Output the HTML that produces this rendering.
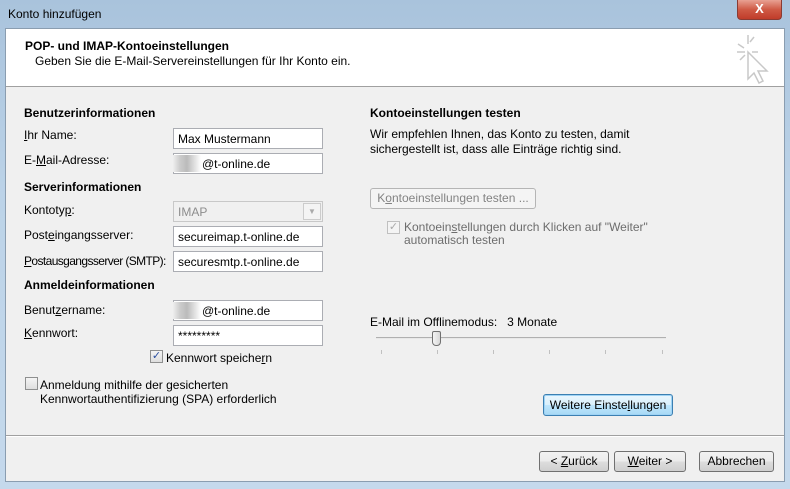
<!DOCTYPE html>
<html><head><meta charset="utf-8"><style>
*{margin:0;padding:0;box-sizing:border-box}
body{width:790px;height:489px;overflow:hidden;font-family:"Liberation Sans",sans-serif;font-size:12px;color:#000;background:linear-gradient(#a9c3dc,#bcd3e8 40%,#c5d9ec);position:relative}
.a{position:absolute;white-space:nowrap}
.in{position:absolute;background:#fff;border:1px solid #abadb3;height:21px;padding:3px 0 0 4px}
.b{font-weight:bold}
.btn{position:absolute;height:21px;border:1px solid #707070;border-radius:3px;background:linear-gradient(#f2f2f2,#ebebeb 50%,#dddddd 51%,#cfcfcf);text-align:center;line-height:19px}
.cb{position:absolute;width:13px;height:13px;border:1px solid #8e8f8f;background:linear-gradient(#f4f4f4,#dedede)}
u{text-decoration:underline}
</style></head><body>
<div class="a" style="left:8px;top:7px">Konto hinzufügen</div>
<div class="a" style="left:737px;top:0;width:45px;height:20px;border:1px solid #8a3b33;border-top:none;border-radius:0 0 4px 4px;background:linear-gradient(#e8a193,#cf5a45 50%,#c03c2a);color:#fff;font-weight:bold;text-align:center;line-height:18px;font-size:13px">X</div>
<div class="a" style="left:5px;top:28px;width:780px;height:454px;background:#f0f0f0;border:1px solid #8a9db0"></div>
<div class="a" style="left:6px;top:29px;width:778px;height:58px;background:#fff;border-bottom:1px solid #a0a0a0"></div>
<div class="a b" style="left:25px;top:39px">POP- und IMAP-Kontoeinstellungen</div>
<div class="a" style="left:35px;top:54px">Geben Sie die E-Mail-Servereinstellungen für Ihr Konto ein.</div>
<svg class="a" style="left:734px;top:32px" width="40" height="52" viewBox="0 0 40 52" fill="none" stroke="#c8c8c8" stroke-width="1.5"><path d="M14 3v9M4 12l6 4M20 5l-4 5M3 20h8M18 20h6M6 28l5-5"/><path d="M14 20l0 27 6-6 5 10 4-2-5-10 9 0z" fill="#fff"/></svg>
<div class="a b" style="left:24px;top:106px">Benutzerinformationen</div>
<div class="a" style="left:24px;top:128px"><u>I</u>hr Name:</div>
<div class="in" style="left:173px;top:128px;width:150px">Max Mustermann</div>
<div class="a" style="left:24px;top:153px">E-<u>M</u>ail-Adresse:</div>
<div class="in" style="left:173px;top:153px;width:150px;padding-left:28px">@t-online.de</div>
<div class="a" style="left:173px;top:155px;width:28px;height:17px;background:linear-gradient(90deg,#eee,#ccc,#bbb,#ddd,#fff)"></div>
<div class="a b" style="left:24px;top:180px">Serverinformationen</div>
<div class="a" style="left:24px;top:203px">Kontoty<u>p</u>:</div>
<div class="in" style="left:173px;top:201px;width:150px;background:#f0f0f0;border-color:#c8c8c8;color:#8d8d8d">IMAP</div>
<div class="a" style="left:303px;top:203px;width:18px;height:17px;border:1px solid #ccc;background:#f4f4f4;color:#aaa;font-size:8px;text-align:center;line-height:16px">▼</div>
<div class="a" style="left:24px;top:228px">Post<u>e</u>ingangsserver:</div>
<div class="in" style="left:173px;top:226px;width:150px">secureimap.t-online.de</div>
<div class="a" style="left:24px;top:254px;letter-spacing:-0.6px"><u>P</u>ostausgangsserver (SMTP):</div>
<div class="in" style="left:173px;top:251px;width:150px">securesmtp.t-online.de</div>
<div class="a b" style="left:24px;top:278px">Anmeldeinformationen</div>
<div class="a" style="left:24px;top:303px">Benut<u>z</u>ername:</div>
<div class="in" style="left:173px;top:300px;width:150px;padding-left:28px">@t-online.de</div>
<div class="a" style="left:173px;top:302px;width:28px;height:17px;background:linear-gradient(90deg,#eee,#ccc,#bbb,#ddd,#fff)"></div>
<div class="a" style="left:24px;top:326px"><u>K</u>ennwort:</div>
<div class="in" style="left:173px;top:325px;width:150px">*********</div>
<div class="cb" style="left:150px;top:350px;color:#2a4fa0;font-size:11px;line-height:11px;text-align:center">✓</div>
<div class="a" style="left:166px;top:351px">Kennwort speiche<u>r</u>n</div>
<div class="cb" style="left:25px;top:377px"></div>
<div class="a" style="left:40px;top:378px;line-height:14px">Anmeldun<u>g</u> mithilfe der gesicherten<br>Kennwortauthentifizierung (SPA) erforderlich</div>
<div class="a b" style="left:370px;top:106px">Kontoeinstellungen testen</div>
<div class="a" style="left:370px;top:127px;line-height:15px">Wir empfehlen Ihnen, das Konto zu testen, damit<br>sichergestellt ist, dass alle Einträge richtig sind.</div>
<div class="btn" style="left:370px;top:188px;width:166px;border-color:#b5b5b5;background:#f4f4f4;color:#838383">K<u>o</u>ntoeinstellungen testen ...</div>
<div class="cb" style="left:387px;top:221px;border-color:#c0c0c0;background:#f4f4f4;color:#aaa;font-size:11px;line-height:11px;text-align:center">✓</div>
<div class="a" style="left:404px;top:221px;line-height:13px;color:#6d6d6d">Kontoein<u>s</u>tellungen durch Klicken auf "Weiter"<br>automatisch testen</div>
<div class="a" style="left:370px;top:315px">E-Mail im Offlinemodus:&nbsp;&nbsp; 3 Monate</div>
<div class="a" style="left:376px;top:337px;width:290px;height:2px;border-top:1px solid #b0b0b0;border-bottom:1px solid #e8e8e8"></div>
<div class="a" style="left:432px;top:331px;width:9px;height:15px;border:1px solid #707070;border-radius:2px 2px 4px 4px;background:linear-gradient(90deg,#f4f4f4,#d8d8d8)"></div>
<div class="a" style="left:381px;top:350px;width:1px;height:4px;background:#c0c0c0"></div>
<div class="a" style="left:437px;top:350px;width:1px;height:4px;background:#c0c0c0"></div>
<div class="a" style="left:493px;top:350px;width:1px;height:4px;background:#c0c0c0"></div>
<div class="a" style="left:549px;top:350px;width:1px;height:4px;background:#c0c0c0"></div>
<div class="a" style="left:605px;top:350px;width:1px;height:4px;background:#c0c0c0"></div>
<div class="a" style="left:662px;top:350px;width:1px;height:4px;background:#c0c0c0"></div>
<div class="btn" style="left:543px;top:394px;width:130px;height:22px;border-color:#3c7fb1;background:linear-gradient(#eaf6fd,#d9f0fc 50%,#bee6fd 51%,#a7d9f5);box-shadow:0 0 0 1px #9ed3f5 inset;line-height:20px">Weitere Einste<u>l</u>lungen</div>
<div class="a" style="left:6px;top:435px;width:778px;height:2px;border-top:1px solid #a0a0a0;border-bottom:1px solid #fff"></div>
<div class="btn" style="left:539px;top:451px;width:70px">&lt; <u>Z</u>urück</div>
<div class="btn" style="left:614px;top:451px;width:72px"><u>W</u>eiter &gt;</div>
<div class="btn" style="left:699px;top:451px;width:75px">Abbrechen</div>
</body></html>
